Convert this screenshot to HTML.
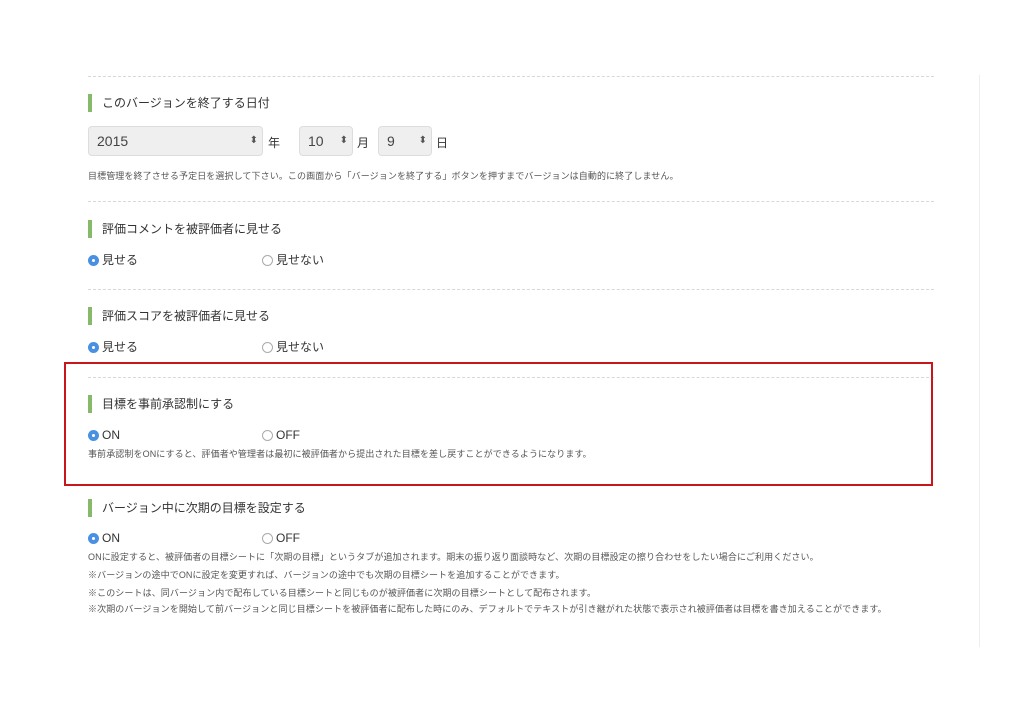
<!DOCTYPE html>
<html><head><meta charset="utf-8"><style>
body{margin:0;width:1024px;height:724px;background:#fff;font-family:"Liberation Sans","Noto Sans CJK JP",sans-serif;color:#333;position:relative;overflow:hidden}
.a{position:absolute;white-space:nowrap}
.dash{position:absolute;left:88px;width:846px;border-top:1px dashed #d8d8d8;height:0}
.h{position:absolute;left:88px;height:18px;border-left:4px solid #86b96a;padding-left:10px;font-size:12px;line-height:18px;color:#333}
.note{position:absolute;left:88px;font-size:9px;letter-spacing:0.1px;color:#555;white-space:nowrap}
.r{position:absolute;font-size:12px;line-height:14px;display:flex;align-items:center}
.r i{display:inline-block;width:11px;height:11px;border-radius:50%;border:1px solid #aaa;margin-right:3px;box-sizing:border-box;background:#fff}
.r i.on{background:#4a90e2;border:none;position:relative}
.r i.on:after{content:"";position:absolute;left:4px;top:4px;width:3px;height:3px;border-radius:50%;background:#fff}
.sel{position:absolute;height:30px;top:126px;background:#efefef;border:1px solid #ddd;border-radius:4px;box-sizing:border-box;font-size:14px;line-height:28px;padding-left:8px;color:#444}
.sel:after{content:"⬍";position:absolute;right:4px;top:0;font-size:10px;color:#555}
</style></head><body>
<div style="position:absolute;left:979px;top:75px;width:1px;height:572px;background:#eee"></div>
<div class="dash" style="top:76px"></div>
<div class="h" style="top:94px">このバージョンを終了する日付</div>
<div class="sel" style="left:88px;width:175px">2015</div>
<div class="a" style="left:268px;top:134px;font-size:12px">年</div>
<div class="sel" style="left:299px;width:54px">10</div>
<div class="a" style="left:357px;top:134px;font-size:12px">月</div>
<div class="sel" style="left:378px;width:54px">9</div>
<div class="a" style="left:436px;top:134px;font-size:12px">日</div>
<div class="note" style="top:169px">目標管理を終了させる予定日を選択して下さい。この画面から「バージョンを終了する」ボタンを押すまでバージョンは自動的に終了しません。</div>
<div class="dash" style="top:201px"></div>
<div class="h" style="top:220px">評価コメントを被評価者に見せる</div>
<div class="r" style="left:88px;top:253px"><i class="on"></i>見せる</div>
<div class="r" style="left:262px;top:253px"><i></i>見せない</div>
<div class="dash" style="top:289px"></div>
<div class="h" style="top:307px">評価スコアを被評価者に見せる</div>
<div class="r" style="left:88px;top:340px"><i class="on"></i>見せる</div>
<div class="r" style="left:262px;top:340px"><i></i>見せない</div>
<div class="dash" style="top:377px"></div>
<div style="position:absolute;left:64px;top:362px;width:865px;height:120px;border:2px solid #c8161d"></div>
<div class="h" style="top:395px">目標を事前承認制にする</div>
<div class="r" style="left:88px;top:428px"><i class="on"></i>ON</div>
<div class="r" style="left:262px;top:428px"><i></i>OFF</div>
<div class="note" style="top:447px">事前承認制をONにすると、評価者や管理者は最初に被評価者から提出された目標を差し戻すことができるようになります。</div>
<div class="h" style="top:499px">バージョン中に次期の目標を設定する</div>
<div class="r" style="left:88px;top:531px"><i class="on"></i>ON</div>
<div class="r" style="left:262px;top:531px"><i></i>OFF</div>
<div class="note" style="top:550px">ONに設定すると、被評価者の目標シートに「次期の目標」というタブが追加されます。期末の振り返り面談時など、次期の目標設定の擦り合わせをしたい場合にご利用ください。</div>
<div class="note" style="top:568px">※バージョンの途中でONに設定を変更すれば、バージョンの途中でも次期の目標シートを追加することができます。</div>
<div class="note" style="top:586px">※このシートは、同バージョン内で配布している目標シートと同じものが被評価者に次期の目標シートとして配布されます。</div>
<div class="note" style="top:602px">※次期のバージョンを開始して前バージョンと同じ目標シートを被評価者に配布した時にのみ、デフォルトでテキストが引き継がれた状態で表示され被評価者は目標を書き加えることができます。</div>
</body></html>
